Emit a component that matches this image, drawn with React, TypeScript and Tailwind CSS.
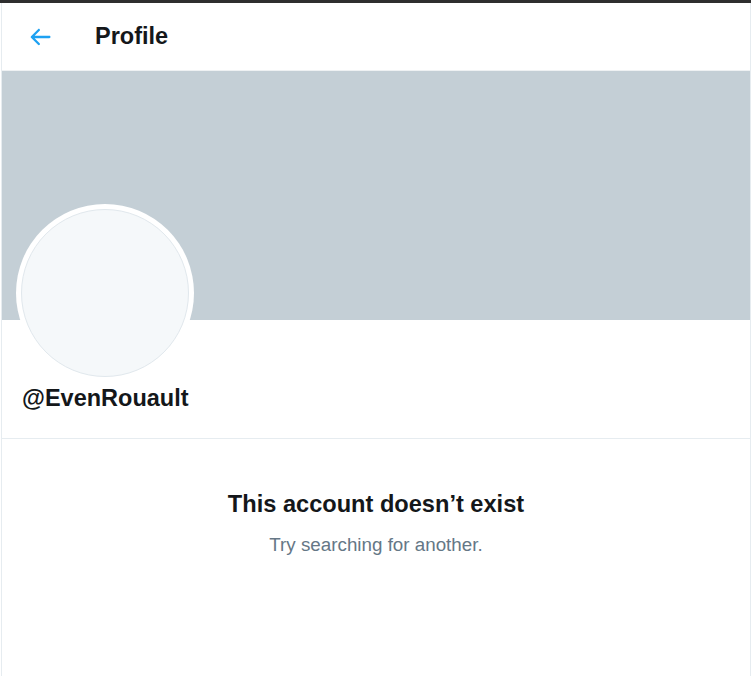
import React from "react";

export default function App() {
  return (
    <div className="w-[751px] h-[676px] bg-white overflow-hidden" style={{ fontFamily: '"Liberation Sans", Arial, sans-serif' }}>
      <div className="h-[3px] bg-[#2e2e2e]" />
      <div className="ml-[1px] w-[750px] h-[673px] border-l border-r border-[#e6ecf0] flex flex-col">
        <div className="h-[68px] flex items-center border-b border-[#eef1f3]">
          <div className="w-[93px] pl-[24px] flex items-center">
            <svg viewBox="0 0 24 24" className="w-[28px] h-[28px]" fill="#1da1f2">
              <path d="M20 11H7.414l4.293-4.293c.39-.39.39-1.023 0-1.414s-1.023-.39-1.414 0l-6 6c-.39.39-.39 1.023 0 1.414l6 6c.195.195.45.293.707.293s.512-.098.707-.293c.39-.39.39-1.023 0-1.414L7.414 13H20c.553 0 1-.447 1-1s-.447-1-1-1z" />
            </svg>
          </div>
          <div className="text-[23.5px] font-bold text-[#14171a] leading-none">Profile</div>
        </div>
        <div className="h-[249px] bg-[#c4cfd6]" />
        <div className="border-b border-[#e6ecf0] pb-[25px]">
          <div className="ml-[14px] -mt-[116px] w-[178px] h-[178px] rounded-full bg-white flex items-center justify-center">
            <div className="w-[168px] h-[168px] rounded-full bg-[#f5f8fa] border border-[#e1e8ed]" />
          </div>
          <div className="pl-[20px] mt-[1px] text-[23.5px] font-bold text-[#14171a] leading-[30px]">@EvenRouault</div>
        </div>
        <div className="flex flex-col items-center pt-[50px]">
          <div className="text-[23.6px] font-bold text-[#14171a] leading-[30px]">This account doesn’t exist</div>
          <div className="mt-[14px] text-[18.8px] text-[#657786] leading-[24px]">Try searching for another.</div>
        </div>
      </div>
    </div>
  );
}
